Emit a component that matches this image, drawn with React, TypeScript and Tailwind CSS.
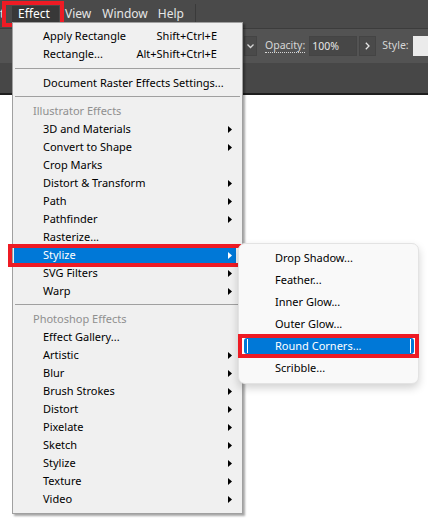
import React from 'react'

const font = { fontFamily: '"Segoe UI", "Noto Sans", sans-serif' }

type Item =
  | { kind: 'item'; label: string; shortcut?: string; sub?: boolean; active?: boolean }
  | { kind: 'sep'; tall?: boolean }
  | { kind: 'head'; label: string }

const items: Item[] = [
  { kind: 'item', label: 'Apply Rectangle', shortcut: 'Shift+Ctrl+E' },
  { kind: 'item', label: 'Rectangle...', shortcut: 'Alt+Shift+Ctrl+E' },
  { kind: 'sep', tall: true },
  { kind: 'item', label: 'Document Raster Effects Settings...' },
  { kind: 'sep' },
  { kind: 'head', label: 'Illustrator Effects' },
  { kind: 'item', label: '3D and Materials', sub: true },
  { kind: 'item', label: 'Convert to Shape', sub: true },
  { kind: 'item', label: 'Crop Marks' },
  { kind: 'item', label: 'Distort & Transform', sub: true },
  { kind: 'item', label: 'Path', sub: true },
  { kind: 'item', label: 'Pathfinder', sub: true },
  { kind: 'item', label: 'Rasterize...' },
  { kind: 'item', label: 'Stylize', sub: true, active: true },
  { kind: 'item', label: 'SVG Filters', sub: true },
  { kind: 'item', label: 'Warp', sub: true },
  { kind: 'sep' },
  { kind: 'head', label: 'Photoshop Effects' },
  { kind: 'item', label: 'Effect Gallery...' },
  { kind: 'item', label: 'Artistic', sub: true },
  { kind: 'item', label: 'Blur', sub: true },
  { kind: 'item', label: 'Brush Strokes', sub: true },
  { kind: 'item', label: 'Distort', sub: true },
  { kind: 'item', label: 'Pixelate', sub: true },
  { kind: 'item', label: 'Sketch', sub: true },
  { kind: 'item', label: 'Stylize', sub: true },
  { kind: 'item', label: 'Texture', sub: true },
  { kind: 'item', label: 'Video', sub: true },
]

const subItems = ['Drop Shadow...', 'Feather...', 'Inner Glow...', 'Outer Glow...', 'Round Corners...', 'Scribble...']

function Arrow({ color = '#000' }: { color?: string }) {
  return (
    <svg width="4" height="7" viewBox="0 0 4 7" className="absolute right-[10px] top-[6px]">
      <path d="M0 0 L4 3.5 L0 7 Z" fill={color} />
    </svg>
  )
}

function MenuRow({ item }: { item: Item }) {
  if (item.kind === 'sep') {
    return <div className={`${item.tall ? 'mt-[5px]' : 'mt-[4px]'} mb-[5px] mx-[2px] h-px bg-[#a0a0a0]`} />
  }
  if (item.kind === 'head') {
    return <div className="h-[18px] leading-[18px] pl-[20px] text-[#8f8f8f]">{item.label}</div>
  }
  return (
    <div className="relative h-[18px]">
      {item.active && (
        <>
          <div className="absolute left-[1px] right-[6px] top-[2px] bottom-[1px] bg-[#0078d7]" />
          <div className="absolute -left-[5px] -right-[1px] -top-[2px] -bottom-[3px] border-4 border-[#ee1b24]" />
        </>
      )}
      <div className={`relative leading-[18px] pl-[30px] ${item.active ? 'text-white' : 'text-black'}`}>{item.label}</div>
      {item.shortcut && (
        <div className="absolute right-[25px] top-0 leading-[18px] text-black">{item.shortcut}</div>
      )}
      {item.sub && <Arrow color={item.active ? '#fff' : '#000'} />}
    </div>
  )
}

export default function App() {
  return (
    <div className="relative w-[428px] h-[520px] overflow-hidden bg-white text-[11px]" style={font}>
      {/* menu bar */}
      <div className="h-[29px] bg-[#4a4a4a] flex items-center text-[12px] text-[#e6e6e6] border-b border-[#3c3c3c]">
        <span className="w-[4px] overflow-hidden">t</span>
        <div className="relative ml-[8px] h-[16px] w-[47px] pl-[6px] leading-[16px] bg-[#383838] text-white">
          Effect
          <div className="absolute -left-[10px] -right-[5px] -top-[5px] -bottom-[5px] border-4 border-[#ee1b24]" />
        </div>
        <span className="ml-[6px]">View</span>
        <span className="ml-[11px]">Window</span>
        <span className="ml-[10px]">Help</span>
        <div className="ml-[11px] w-px h-[20px] bg-[#3a3a3a]" />
      </div>

      {/* control bar */}
      <div className="h-[34px] bg-[#535353] flex items-center text-[10.5px] text-[#d6d6d6]">
        <div className="ml-[244px] w-[13px] h-[20px] bg-[#4a4a4a] border border-[#444] flex items-center justify-center">
          <svg width="7" height="5" viewBox="0 0 7 5"><path d="M0.5 0.5 L3.5 3.5 L6.5 0.5" stroke="#d6d6d6" strokeWidth="1.3" fill="none" /></svg>
        </div>
        <span className="ml-[8px] border-b border-dotted border-[#d6d6d6] leading-[13px]">Opacity:</span>
        <div className="ml-[4px] w-[48px] h-[20px] bg-[#474747] border border-[#444] pl-[2px] leading-[18px] text-[#e6e6e6]">100%</div>
        <div className="ml-[2px] w-[17px] h-[20px] bg-[#4a4a4a] border border-[#444] flex items-center justify-center">
          <svg width="5" height="8" viewBox="0 0 5 8"><path d="M0.8 0.8 L4 4 L0.8 7.2" stroke="#e6e6e6" strokeWidth="1.3" fill="none" /></svg>
        </div>
        <span className="ml-[6px]">Style:</span>
        <div className="ml-[4px] flex-1 h-[20px] bg-[#ebebeb]" />
      </div>

      {/* lower bar */}
      <div className="h-[32px] bg-[#474747] border-b-2 border-[#1e1e1e]" />

      {/* Effect menu */}
      <div className="absolute left-[12px] top-[22px] w-[231px] pt-[4px] pb-[5px] bg-[#f0f0f0] border border-[#a0a0a0] shadow-[2px_2px_2px_rgba(0,0,0,0.35)] text-[11px]">
        {items.map((item, i) => (
          <MenuRow key={i} item={item} />
        ))}
      </div>

      {/* Stylize submenu */}
      <div className="absolute left-[238px] top-[243px] w-[181px] pt-[3px] pb-[4px] bg-[#f9f9f9] border border-[#e3e3e3] rounded-[7px] shadow-[0_4px_8px_rgba(0,0,0,0.18)] text-[11px] text-black">
        {subItems.map((label) => {
          const active = label === 'Round Corners...'
          return (
            <div key={label} className="relative h-[22px]">
              {active && (
                <>
                  <div className="absolute -left-[1px] -right-[1px] -top-[1px] -bottom-[1px] border-4 border-[#ee1b24] bg-white" />
                  <div className="absolute left-[5px] right-[4px] top-[3px] bottom-[3px] bg-[#0078d7] rounded-[3px]" />
                  <div className="absolute left-[8px] top-[4px] bottom-[4px] w-px bg-white" />
                  <div className="absolute right-[7px] top-[4px] bottom-[4px] w-px bg-white" />
                </>
              )}
              <div className={`relative leading-[22px] pl-[36px] ${active ? 'text-white' : ''}`}>{label}</div>
            </div>
          )
        })}
      </div>
    </div>
  )
}
